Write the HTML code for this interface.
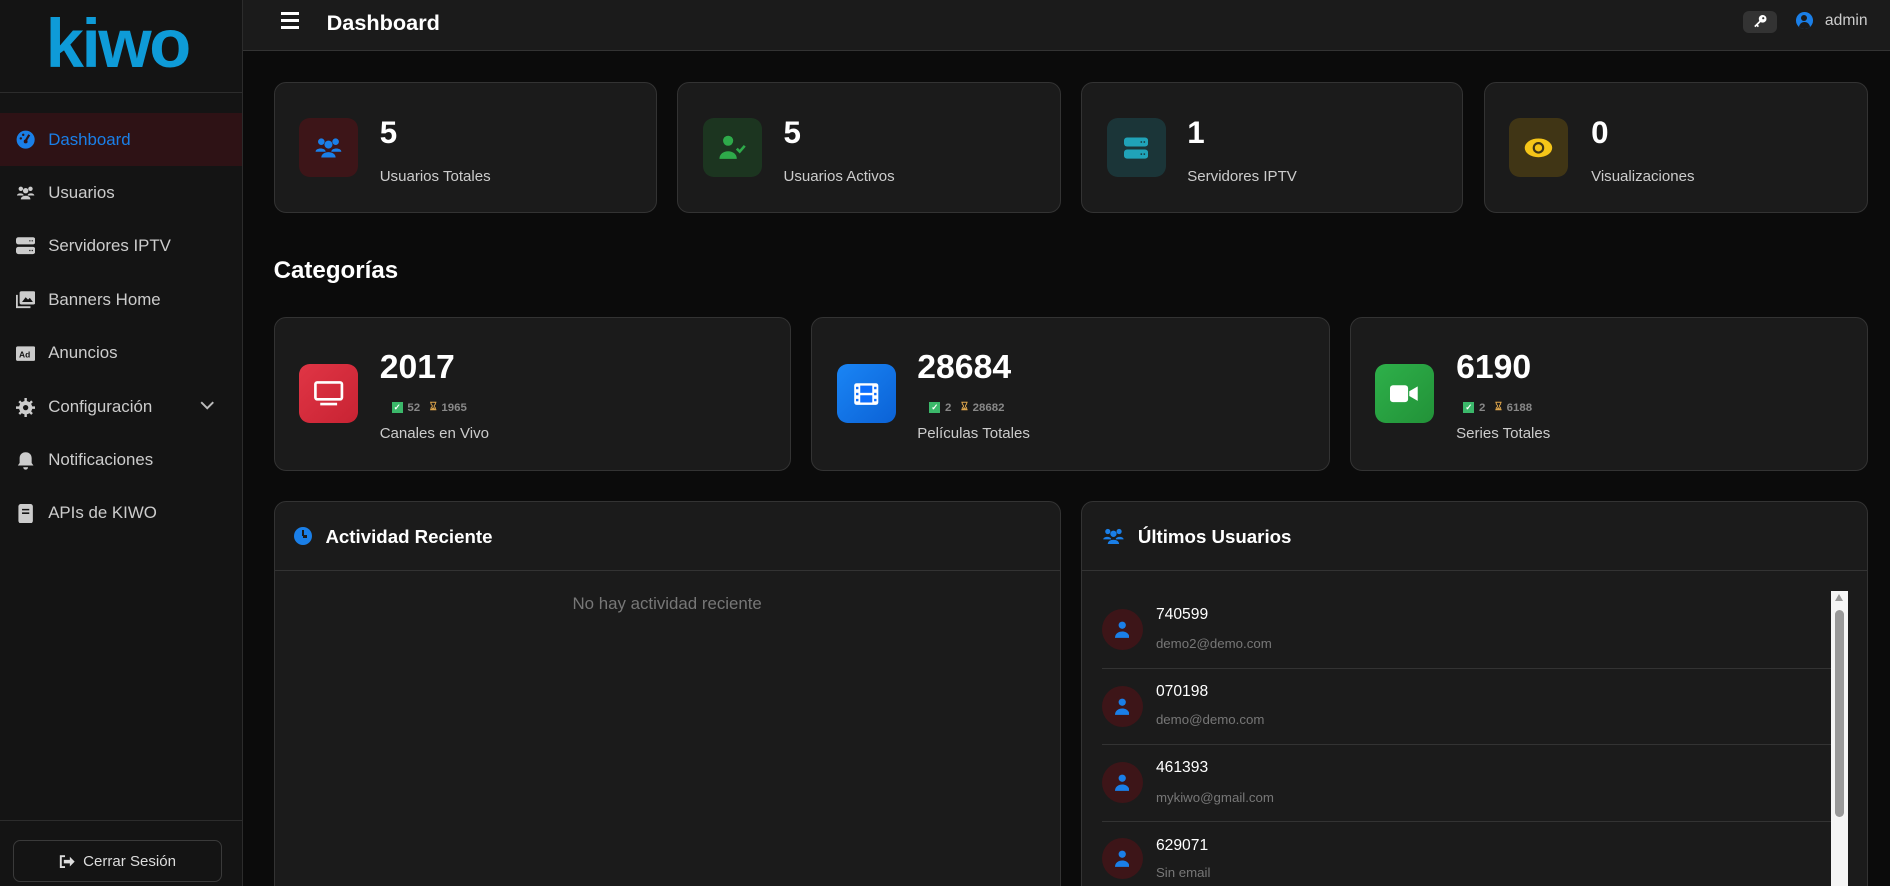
<!DOCTYPE html>
<html><head><meta charset="utf-8"><style>
*{box-sizing:border-box;margin:0;padding:0}
html,body{width:1890px;height:886px;overflow:hidden;background:#0b0b0b}
#w{zoom:1.20536;width:1568px;height:735px;position:relative;font-family:"Liberation Sans",Arial,sans-serif;color:#ddd;overflow:hidden}
.a{position:absolute}
#sb{left:0;top:0;width:202px;height:735px;background:#141414;border-right:1px solid #2c2c2c}
.logo{left:38px;top:7px;font-size:57px;font-weight:bold;color:#0e9bd8;letter-spacing:-2px;line-height:60px}
.nav{left:0;width:201px;height:44px;display:flex;align-items:center;padding-left:13px;font-size:14px;color:#ccc}
.nav svg{width:16px;height:16px;margin-right:11px;fill:#ccc}
.card{background:#1b1b1b;border:1px solid #333;border-radius:10px}
.ib{width:49px;height:49px;border-radius:9px;display:flex;align-items:center;justify-content:center}
.num{font-weight:bold;color:#fff}
.lbl{font-size:12.5px;color:#ccc}
.sep{height:1px;background:#333}
.av{width:34px;height:34px;border-radius:50%;background:#3d1518;display:flex;align-items:center;justify-content:center}
.bd{font-size:9.5px;font-weight:bold;color:#888;display:flex;align-items:center}
.ck{display:inline-block;width:9px;height:9px;background:#3bb86a;color:#fff;font-size:7px;line-height:9px;text-align:center;margin-right:4px}
.hg{color:#d9a24a;margin:0 4px 0 8px;font-size:9px}
</style></head><body><div id="w">
<div class="a" style="left:202px;top:42px;width:1366px;height:693px;background:#0b0b0b"></div>
<div id="sb" class="a">
 <div class="a logo">kiwo</div>
 <div class="a" style="left:0;top:76px;width:201px;height:1px;background:#2c2c2c"></div>
 <div class="a nav" style="top:94px;background:#2e1215;color:#1a7fe8"><svg viewBox="0 0 16 16" style="fill:#1a7fe8"><circle cx="8" cy="8" r="7.5"/><path d="M8 9 L11 4" stroke="#2e1215" stroke-width="1.8"/><circle cx="8" cy="9.5" r="1.6" fill="#2e1215"/><circle cx="4" cy="7" r="1" fill="#2e1215"/><circle cx="6" cy="4" r="1" fill="#2e1215"/></svg>Dashboard</div>
 <div class="a nav" style="top:138px"><svg viewBox="0 0 20 16"><circle cx="5" cy="4" r="2.3"/><circle cx="15" cy="4" r="2.3"/><circle cx="10" cy="6" r="2.8"/><path d="M1 11c0-3 7-3 7 0zM12 11c0-3 7-3 7 0zM5 15c0-5 10-5 10 0z"/></svg>Usuarios</div>
 <div class="a nav" style="top:182px"><svg viewBox="0 0 16 16"><rect x="0" y="1" width="16" height="6" rx="2"/><rect x="0" y="9" width="16" height="6" rx="2"/><path d="M11 3.5h1v1h-1zM13 3.5h1v1h-1zM11 11.5h1v1h-1zM13 11.5h1v1h-1z" fill="#141414"/></svg>Servidores IPTV</div>
 <div class="a nav" style="top:227px"><svg viewBox="0 0 16 16"><rect x="3" y="1" width="13" height="11" rx="1.5"/><path d="M0 4v11h12v-1.5H1.5V4z"/><path d="M5 10l3-4 2 2 1.5-1.5L14 10z" fill="#141414"/></svg>Banners Home</div>
 <div class="a nav" style="top:271px"><svg viewBox="0 0 16 16"><rect x="0" y="2" width="16" height="12" rx="1.5"/><text x="2.5" y="11" font-size="7" font-weight="bold" fill="#141414" font-family="Liberation Sans">Ad</text></svg>Anuncios</div>
 <div class="a nav" style="top:316px"><svg viewBox="0 0 16 16"><circle cx="8" cy="8" r="5.5"/><path d="M7 0h2v3H7zM7 13h2v3H7zM0 7h3v2H0zM13 7h3v2h-3zM2 3.4l1.4-1.4 2 2-1.4 1.4zM10.6 12l1.4-1.4 2 2-1.4 1.4zM2 12.6l2-2 1.4 1.4-2 2zM10.6 4l2-2 1.4 1.4-2 2z"/><circle cx="8" cy="8" r="2.2" fill="#141414"/></svg>Configuración<svg class="a" style="left:166px;top:17px;width:12px;height:8px;margin:0" viewBox="0 0 12 8"><path d="M1 1l5 5 5-5" stroke="#bbb" stroke-width="1.6" fill="none"/></svg></div>
 <div class="a nav" style="top:360px"><svg viewBox="0 0 16 16"><path d="M8 1c-3 0-5 2-5 5v4l-1.5 2h13L13 10V6c0-3-2-5-5-5zM6 13.5h4a2 2 0 0 1-4 0z"/></svg>Notificaciones</div>
 <div class="a nav" style="top:404px"><svg viewBox="0 0 16 16"><rect x="2" y="0" width="12" height="16" rx="2"/><path d="M5 4h6v1.3H5zM5 7h6v1.3H5z" fill="#141414"/></svg>APIs de KIWO</div>
 <div class="a" style="left:0;top:680px;width:201px;height:1px;background:#2c2c2c"></div>
 <div class="a" style="left:11px;top:697px;width:173px;height:35px;border:1px solid #3a3a3a;border-radius:6px;display:flex;align-items:center;justify-content:center;font-size:12.5px;color:#ddd"><svg width="13" height="11" viewBox="0 0 13 11" style="margin-right:7px"><path d="M5 1H1.5v9H5" stroke="#ddd" stroke-width="1.6" fill="none"/><path d="M4 4h5V1.5l4 4-4 4V7H4z" fill="#ddd"/></svg>Cerrar Sesión</div>
</div>
<div class="a" style="left:202px;top:0;width:1366px;height:42px;background:#1b1b1b;border-bottom:1px solid #333"></div>
<div class="a" style="left:233px;top:10px;width:15px"><div style="height:2.5px;background:#fff;margin-bottom:3.5px"></div><div style="height:2.5px;background:#fff;margin-bottom:3.5px"></div><div style="height:2.5px;background:#fff"></div></div>
<div class="a" style="left:271px;top:8px;font-size:18px;font-weight:bold;color:#fff">Dashboard</div>
<div class="a" style="left:1446px;top:9px;width:28px;height:18px;border-radius:5px;background:#333"><svg class="a" style="left:8px;top:3px" width="12" height="12" viewBox="0 0 12 12"><circle cx="8" cy="4" r="3.2" fill="#fff"/><path d="M6 5L1 10l1 1 1-1 1 1 1-1-1-1 2.5-2.5z" fill="#fff"/><circle cx="8.5" cy="3.5" r="0.9" fill="#333"/></svg></div>
<div class="a" style="left:1490px;top:10px;width:14px;height:14px;border-radius:50%;background:#1a7fe8;overflow:hidden"><div style="width:5px;height:5px;border-radius:50%;background:#1b1b1b;margin:2.5px auto 0"></div><div style="width:9px;height:6px;border-radius:5px 5px 0 0;background:#1b1b1b;margin:1px auto 0"></div></div>
<div class="a" style="left:1514px;top:10px;font-size:13px;color:#ccc">admin</div>

<div class="a card" style="left:227px;top:68px;width:318px;height:109px"></div>
<div class="a card" style="left:562px;top:68px;width:318px;height:109px"></div>
<div class="a card" style="left:897px;top:68px;width:317px;height:109px"></div>
<div class="a card" style="left:1231px;top:68px;width:319px;height:109px"></div>
<div class="a ib" style="left:248px;top:98px;background:#3d1518"><svg width="24" height="19" viewBox="0 0 20 16" fill="#1a7fe8"><circle cx="5" cy="4" r="2.3"/><circle cx="15" cy="4" r="2.3"/><circle cx="10" cy="6" r="2.8"/><path d="M1 11c0-3 7-3 7 0zM12 11c0-3 7-3 7 0zM5 15c0-5 10-5 10 0z"/></svg></div>
<div class="a ib" style="left:583px;top:98px;background:#1c3520"><svg width="24" height="22" viewBox="0 0 20 18" fill="#2eaa4a"><circle cx="7" cy="4.5" r="3.5"/><path d="M1 17c0-7 12-7 12 0z"/><path d="M13 10l2 2 3.5-4" stroke="#2eaa4a" stroke-width="1.8" fill="none"/></svg></div>
<div class="a ib" style="left:918px;top:98px;background:#1b3538"><svg width="20" height="20" viewBox="0 0 16 16" fill="#20a3b8"><rect x="0" y="1" width="16" height="6" rx="2"/><rect x="0" y="9" width="16" height="6" rx="2"/><path d="M11 3.5h1v1h-1zM13 3.5h1v1h-1zM11 11.5h1v1h-1zM13 11.5h1v1h-1z" fill="#1b3538"/></svg></div>
<div class="a ib" style="left:1252px;top:98px;background:#403515"><svg width="24" height="18" viewBox="0 0 20 14"><ellipse cx="10" cy="7" rx="9.5" ry="6.5" fill="#f5c518"/><circle cx="10" cy="7" r="4" fill="#403515"/><circle cx="10" cy="7" r="2.5" fill="#f5c518"/></svg></div>
<div class="a num" style="left:315px;top:95px;font-size:26px">5</div><div class="a lbl" style="left:315px;top:139px">Usuarios Totales</div>
<div class="a num" style="left:650px;top:95px;font-size:26px">5</div><div class="a lbl" style="left:650px;top:139px">Usuarios Activos</div>
<div class="a num" style="left:985px;top:95px;font-size:26px">1</div><div class="a lbl" style="left:985px;top:139px">Servidores IPTV</div>
<div class="a num" style="left:1320px;top:95px;font-size:26px">0</div><div class="a lbl" style="left:1320px;top:139px">Visualizaciones</div>

<div class="a" style="left:227px;top:213px;font-size:20px;font-weight:bold;color:#fff">Categorías</div>

<div class="a card" style="left:227px;top:263px;width:429px;height:128px"></div>
<div class="a card" style="left:673px;top:263px;width:430px;height:128px"></div>
<div class="a card" style="left:1120px;top:263px;width:430px;height:128px"></div>
<div class="a ib" style="left:248px;top:302px;background:linear-gradient(135deg,#e03545,#c82333)"><svg width="26" height="22" viewBox="0 0 26 22" fill="none" stroke="#fff" stroke-width="2.2"><rect x="2" y="2" width="22" height="14" rx="1.5"/><path d="M6 20h14"/></svg></div>
<div class="a ib" style="left:694px;top:302px;background:linear-gradient(135deg,#1a85f5,#0b62d6)"><svg width="22" height="20" viewBox="0 0 22 20"><rect x="1" y="1" width="20" height="18" rx="2" fill="#fff"/><g fill="#0d6efd"><rect x="6" y="3" width="10" height="6"/><rect x="6" y="11" width="10" height="6"/><rect x="2.5" y="4" width="2" height="2"/><rect x="2.5" y="9" width="2" height="2"/><rect x="2.5" y="14" width="2" height="2"/><rect x="17.5" y="4" width="2" height="2"/><rect x="17.5" y="9" width="2" height="2"/><rect x="17.5" y="14" width="2" height="2"/></g></svg></div>
<div class="a ib" style="left:1141px;top:302px;background:linear-gradient(135deg,#2eb04a,#229238)"><svg width="24" height="16" viewBox="0 0 24 16" fill="#fff"><rect x="0" y="1" width="15" height="14" rx="2.5"/><path d="M16 6l7-4v12l-7-4z"/></svg></div>
<div class="a num" style="left:315px;top:289px;font-size:28px">2017</div>
<div class="a bd" style="left:325px;top:333px"><span class="ck">&#10003;</span>52<span class="hg">&#8987;&#xFE0E;</span>1965</div>
<div class="a lbl" style="left:315px;top:353px">Canales en Vivo</div>
<div class="a num" style="left:761px;top:289px;font-size:28px">28684</div>
<div class="a bd" style="left:771px;top:333px"><span class="ck">&#10003;</span>2<span class="hg">&#8987;&#xFE0E;</span>28682</div>
<div class="a lbl" style="left:761px;top:353px">Películas Totales</div>
<div class="a num" style="left:1208px;top:289px;font-size:28px">6190</div>
<div class="a bd" style="left:1214px;top:333px"><span class="ck">&#10003;</span>2<span class="hg">&#8987;&#xFE0E;</span>6188</div>
<div class="a lbl" style="left:1208px;top:353px">Series Totales</div>

<div class="a card" style="left:227px;top:416px;width:653px;height:340px"></div>
<div class="a card" style="left:897px;top:416px;width:653px;height:340px"></div>
<div class="a sep" style="left:228px;top:473px;width:651px"></div>
<div class="a sep" style="left:898px;top:473px;width:651px"></div>
<div class="a" style="left:244px;top:437px;width:15px;height:15px;border-radius:50%;background:#1a7fe8"><div style="position:absolute;left:6.5px;top:3px;width:2px;height:5px;background:#1b1b1b"></div><div style="position:absolute;left:7px;top:7px;width:4px;height:2px;background:#1b1b1b"></div></div>
<div class="a" style="left:270px;top:436px;font-size:15.5px;font-weight:bold;color:#fff">Actividad Reciente</div>
<svg class="a" style="left:914px;top:437px" width="19" height="15" viewBox="0 0 20 16" fill="#1a7fe8"><circle cx="5" cy="4" r="2.3"/><circle cx="15" cy="4" r="2.3"/><circle cx="10" cy="6" r="2.8"/><path d="M1 11c0-3 7-3 7 0zM12 11c0-3 7-3 7 0zM5 15c0-5 10-5 10 0z"/></svg>
<div class="a" style="left:944px;top:436px;font-size:15.5px;font-weight:bold;color:#fff">Últimos Usuarios</div>
<div class="a" style="left:228px;top:493px;width:651px;text-align:center;font-size:14px;color:#777">No hay actividad reciente</div>

<div class="a av" style="left:914px;top:505px"><svg width="12" height="14" viewBox="0 0 12 14" fill="#1a7fe8"><circle cx="6" cy="3.5" r="3"/><path d="M0 14c0-7 12-7 12 0z"/></svg></div>
<div class="a av" style="left:914px;top:569px"><svg width="12" height="14" viewBox="0 0 12 14" fill="#1a7fe8"><circle cx="6" cy="3.5" r="3"/><path d="M0 14c0-7 12-7 12 0z"/></svg></div>
<div class="a av" style="left:914px;top:632px"><svg width="12" height="14" viewBox="0 0 12 14" fill="#1a7fe8"><circle cx="6" cy="3.5" r="3"/><path d="M0 14c0-7 12-7 12 0z"/></svg></div>
<div class="a av" style="left:914px;top:695px"><svg width="12" height="14" viewBox="0 0 12 14" fill="#1a7fe8"><circle cx="6" cy="3.5" r="3"/><path d="M0 14c0-7 12-7 12 0z"/></svg></div>
<div class="a" style="left:959px;top:503px;font-size:13px;color:#fff">740599</div><div class="a" style="left:959px;top:528px;font-size:11px;color:#777">demo2@demo.com</div>
<div class="a" style="left:959px;top:567px;font-size:13px;color:#fff">070198</div><div class="a" style="left:959px;top:591px;font-size:11px;color:#777">demo@demo.com</div>
<div class="a" style="left:959px;top:630px;font-size:13px;color:#fff">461393</div><div class="a" style="left:959px;top:655px;font-size:11px;color:#777">mykiwo@gmail.com</div>
<div class="a" style="left:959px;top:694px;font-size:13px;color:#fff">629071</div><div class="a" style="left:959px;top:718px;font-size:11px;color:#777">Sin email</div>
<div class="a sep" style="left:914px;top:554px;width:605px"></div>
<div class="a sep" style="left:914px;top:617px;width:605px"></div>
<div class="a sep" style="left:914px;top:681px;width:605px"></div>
<div class="a" style="left:1519px;top:490px;width:14px;height:250px;background:#f5f5f5"></div>
<div class="a" style="left:1522px;top:493px;width:0;height:0;border-left:4px solid transparent;border-right:4px solid transparent;border-bottom:6px solid #999"></div>
<div class="a" style="left:1522px;top:506px;width:8px;height:172px;border-radius:4px;background:#999"></div>
</div></body></html>
